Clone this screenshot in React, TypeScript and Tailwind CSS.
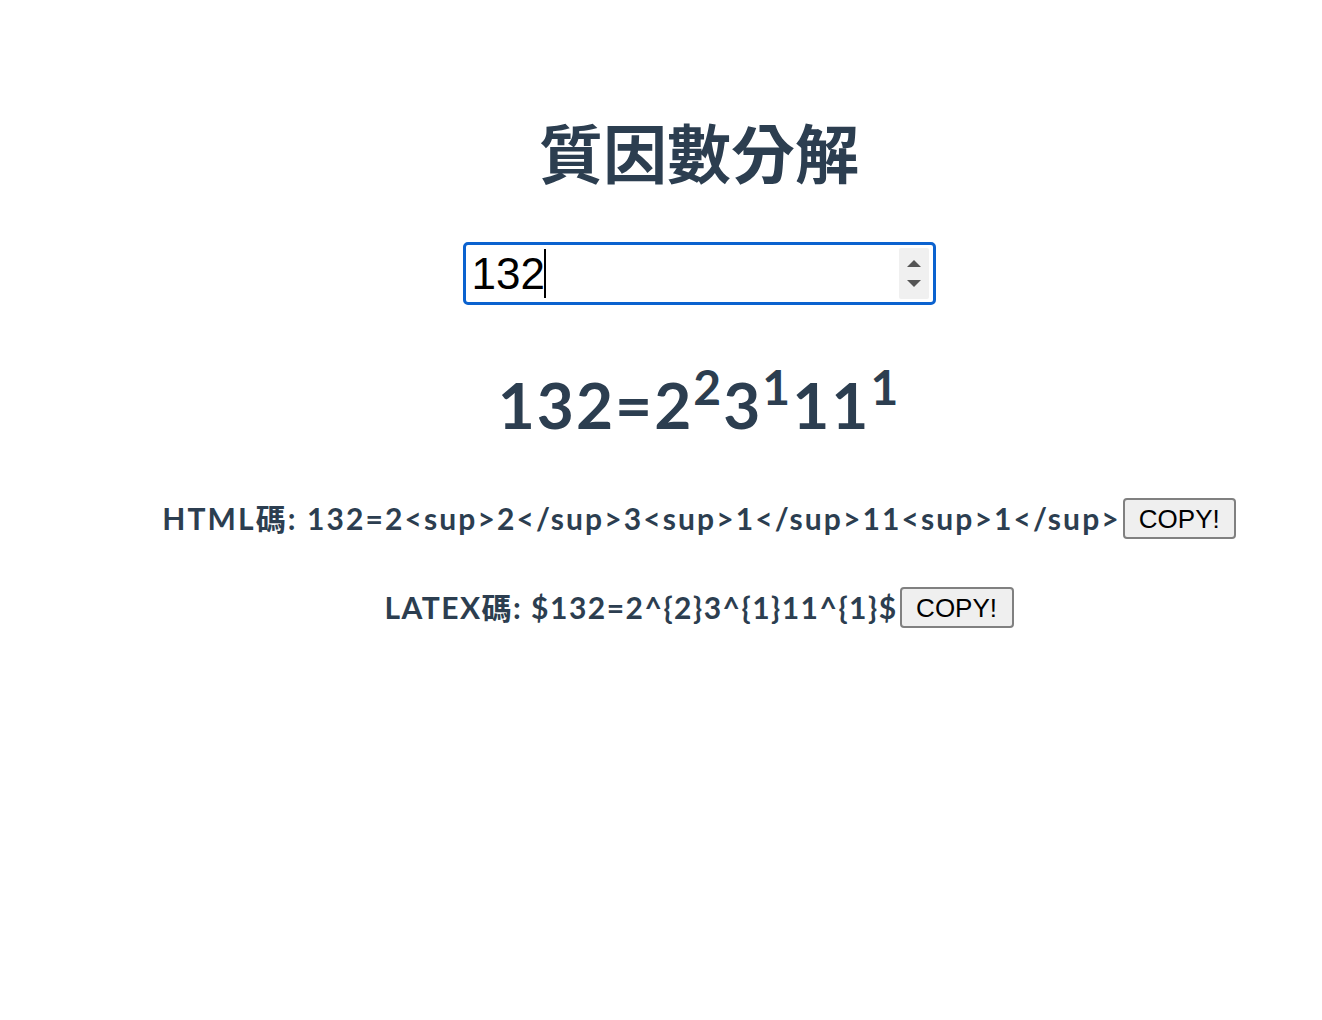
import React, { useState } from 'react';

const factorize = (n: number): [number, number][] => {
  const out: [number, number][] = [];
  let x = n;
  for (let p = 2; p * p <= x; p++) {
    let e = 0;
    while (x % p === 0) {
      x = x / p;
      e++;
    }
    if (e > 0) out.push([p, e]);
  }
  if (x > 1) out.push([x, 1]);
  return out;
};

const App: React.FC = () => {
  const [value, setValue] = useState('132');
  const n = parseInt(value, 10) || 0;
  const factors = n > 1 ? factorize(n) : [];

  const html = `${n}=` + factors.map(([p, e]) => `${p}<sup>${e}</sup>`).join('');
  const latex = `$${n}=` + factors.map(([p, e]) => `${p}^{${e}}`).join('') + '$';

  const copy = (text: string) => {
    navigator.clipboard?.writeText(text).catch(() => {});
  };

  return (
    <div
      className="min-h-[1020px] bg-white pl-[76px] text-center text-[#2c3e50]"
      style={{ fontFamily: "Lato, 'Noto Sans CJK TC', sans-serif" }}
    >
      <h1 className="pt-[116px] text-[64px] font-bold leading-[76px] tracking-[0px]">質因數分解</h1>

      <div className="mt-[50px] flex justify-center">
        <div className="relative">
          <input
            type="text"
            value={value}
            onChange={(e) => setValue(e.target.value.replace(/[^0-9]/g, ''))}
            className="h-[63px] w-[473px] rounded-[5px] border-[3px] border-[#0b62cf] bg-white pl-[6px] pr-[40px] text-[44px] text-black outline-none"
            style={{ fontFamily: "'Liberation Sans', Arial, sans-serif" }}
          />
          <span className="pointer-events-none absolute left-[81px] top-[7px] h-[49px] w-[2px] bg-black" />
          <div className="absolute right-[7px] top-[6px] flex h-[51px] w-[30px] flex-col items-center justify-center gap-[13px] rounded-[2px] bg-[#f0f0f0]">
            <div className="h-0 w-0 border-x-[7px] border-b-[7px] border-x-transparent border-b-[#555]" />
            <div className="h-0 w-0 border-x-[7px] border-t-[7px] border-x-transparent border-t-[#555]" />
          </div>
        </div>
      </div>

      <div className="mt-[62px] text-[64px] font-bold leading-[76px] tracking-[2px]">
        {n}=
        {factors.map(([p, e]) => (
          <React.Fragment key={p}>
            {p}
            <sup className="text-[48px]">{e}</sup>
          </React.Fragment>
        ))}
      </div>

      <div className="mt-[51px] flex items-center justify-center text-[30px] font-bold leading-[48px] tracking-[2.1px]">
        <span>HTML碼: {html}</span>
        <button
          onClick={() => copy(html)}
          className="ml-[2px] h-[41px] w-[113px] rounded-[4px] border-2 border-[#808080] bg-[#efefef] text-[26px] font-normal leading-normal tracking-normal text-black"
          style={{ fontFamily: "'Liberation Sans', Arial, sans-serif" }}
        >
          COPY!
        </button>
      </div>

      <div className="mt-[41px] flex items-center justify-center text-[30px] font-bold leading-[48px] tracking-[1.5px]">
        <span>LATEX碼: {latex}</span>
        <button
          onClick={() => copy(latex)}
          className="ml-[2px] h-[41px] w-[114px] rounded-[4px] border-2 border-[#808080] bg-[#efefef] text-[26px] font-normal leading-normal tracking-normal text-black"
          style={{ fontFamily: "'Liberation Sans', Arial, sans-serif" }}
        >
          COPY!
        </button>
      </div>
    </div>
  );
};

export default App;
